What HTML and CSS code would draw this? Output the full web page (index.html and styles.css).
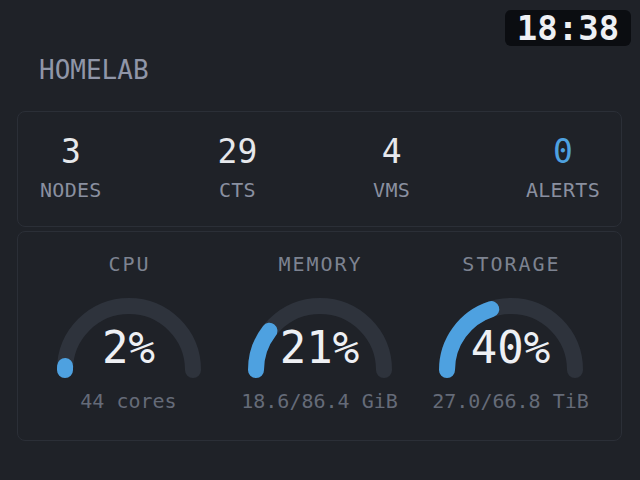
FILE: index.html
```html
<!DOCTYPE html>
<html>
<head>
<meta charset="utf-8">
<link rel="stylesheet" href="styles.css">
</head>
<body>
<div class="clock">18:38</div>
<main class="page">
  <h1 class="title">HOMELAB</h1>
  <section class="card stats">
    <div class="stat"><div class="num">3</div><div class="lbl">NODES</div></div>
    <div class="stat"><div class="num">29</div><div class="lbl">CTS</div></div>
    <div class="stat"><div class="num">4</div><div class="lbl">VMS</div></div>
    <div class="stat"><div class="num alert">0</div><div class="lbl">ALERTS</div></div>
  </section>
  <section class="card gauges">
    <div class="gauge">
      <div class="glabel">CPU</div>
      <div class="dial">
        <svg width="160" height="80" viewBox="0 0 160 80">
          <path class="track" d="M16 72 A64 64 0 0 1 144 72" pathLength="100"/>
          <path class="fill" d="M16 72 A64 64 0 0 1 144 72" pathLength="100" stroke-dasharray="2 200"/>
        </svg>
        <div class="pct">2%</div>
      </div>
      <div class="sub">44 cores</div>
    </div>
    <div class="gauge">
      <div class="glabel">MEMORY</div>
      <div class="dial">
        <svg width="160" height="80" viewBox="0 0 160 80">
          <path class="track" d="M16 72 A64 64 0 0 1 144 72" pathLength="100"/>
          <path class="fill" d="M16 72 A64 64 0 0 1 144 72" pathLength="100" stroke-dasharray="21 200"/>
        </svg>
        <div class="pct">21%</div>
      </div>
      <div class="sub">18.6/86.4 GiB</div>
    </div>
    <div class="gauge">
      <div class="glabel">STORAGE</div>
      <div class="dial">
        <svg width="160" height="80" viewBox="0 0 160 80">
          <path class="track" d="M16 72 A64 64 0 0 1 144 72" pathLength="100"/>
          <path class="fill" d="M16 72 A64 64 0 0 1 144 72" pathLength="100" stroke-dasharray="40 200"/>
        </svg>
        <div class="pct">40%</div>
      </div>
      <div class="sub">27.0/66.8 TiB</div>
    </div>
  </section>
</main>
</body>
</html>
```

FILE: styles.css
```css
html, body {
  margin: 0;
  padding: 0;
  background: #1f2228;
  width: 640px;
  height: 480px;
  overflow: hidden;
}
body {
  position: relative;
  font-family: "DejaVu Sans Mono", "Liberation Mono", monospace;
  color: #e6e8ec;
}
.clock {
  position: absolute;
  top: 10px;
  right: 9px;
  width: 126px;
  height: 36px;
  background: #0b0d11;
  border-radius: 6px;
  color: #eef0f4;
  font-weight: bold;
  font-size: 34px;
  line-height: 36px;
  text-align: center;
}
.page {
  padding: 55px 18px 0 17px;
  display: flex;
  flex-direction: column;
}
.title {
  margin: 0 0 26px 0;
  padding-left: 22px;
  font-size: 26px;
  line-height: 30px;
  font-weight: normal;
  color: #9096a8;
}
.card {
  border: 1px solid #2b2f37;
  border-radius: 8px;
  background: #1f2228;
}
.stats {
  display: flex;
  justify-content: space-between;
  padding: 22px 21px 24px 22px;
}
.stat {
  display: flex;
  flex-direction: column;
  align-items: center;
  gap: 8px;
}
.num {
  font-size: 33px;
  line-height: 36px;
  color: #e6e8ec;
}
.num.alert {
  color: #4ea1e0;
}
.lbl {
  font-size: 20px;
  line-height: 24px;
  letter-spacing: 0.3px;
  color: #8a90a0;
}
.gauges {
  margin-top: 4px;
  display: grid;
  grid-template-columns: 1fr 1fr 1fr;
  column-gap: 12px;
  padding: 20px 21px 27px 21px;
}
.gauge {
  display: flex;
  flex-direction: column;
  align-items: center;
}
.glabel {
  font-size: 20px;
  line-height: 24px;
  letter-spacing: 2px;
  padding-left: 2px;
  color: #7d8391;
}
.dial {
  position: relative;
  margin-top: 22px;
  width: 160px;
  height: 80px;
}
.dial svg {
  display: block;
}
.track, .fill {
  fill: none;
  stroke-width: 16;
  stroke-linecap: round;
}
.track {
  stroke: #2e333c;
}
.fill {
  stroke: #4ea1e0;
}
.pct {
  position: absolute;
  top: 28px;
  left: 0;
  right: 0;
  text-align: center;
  font-size: 44px;
  line-height: 44px;
  color: #eef0f4;
}
.sub {
  margin-top: 11px;
  font-size: 20px;
  line-height: 24px;
  color: #656b78;
}
```
